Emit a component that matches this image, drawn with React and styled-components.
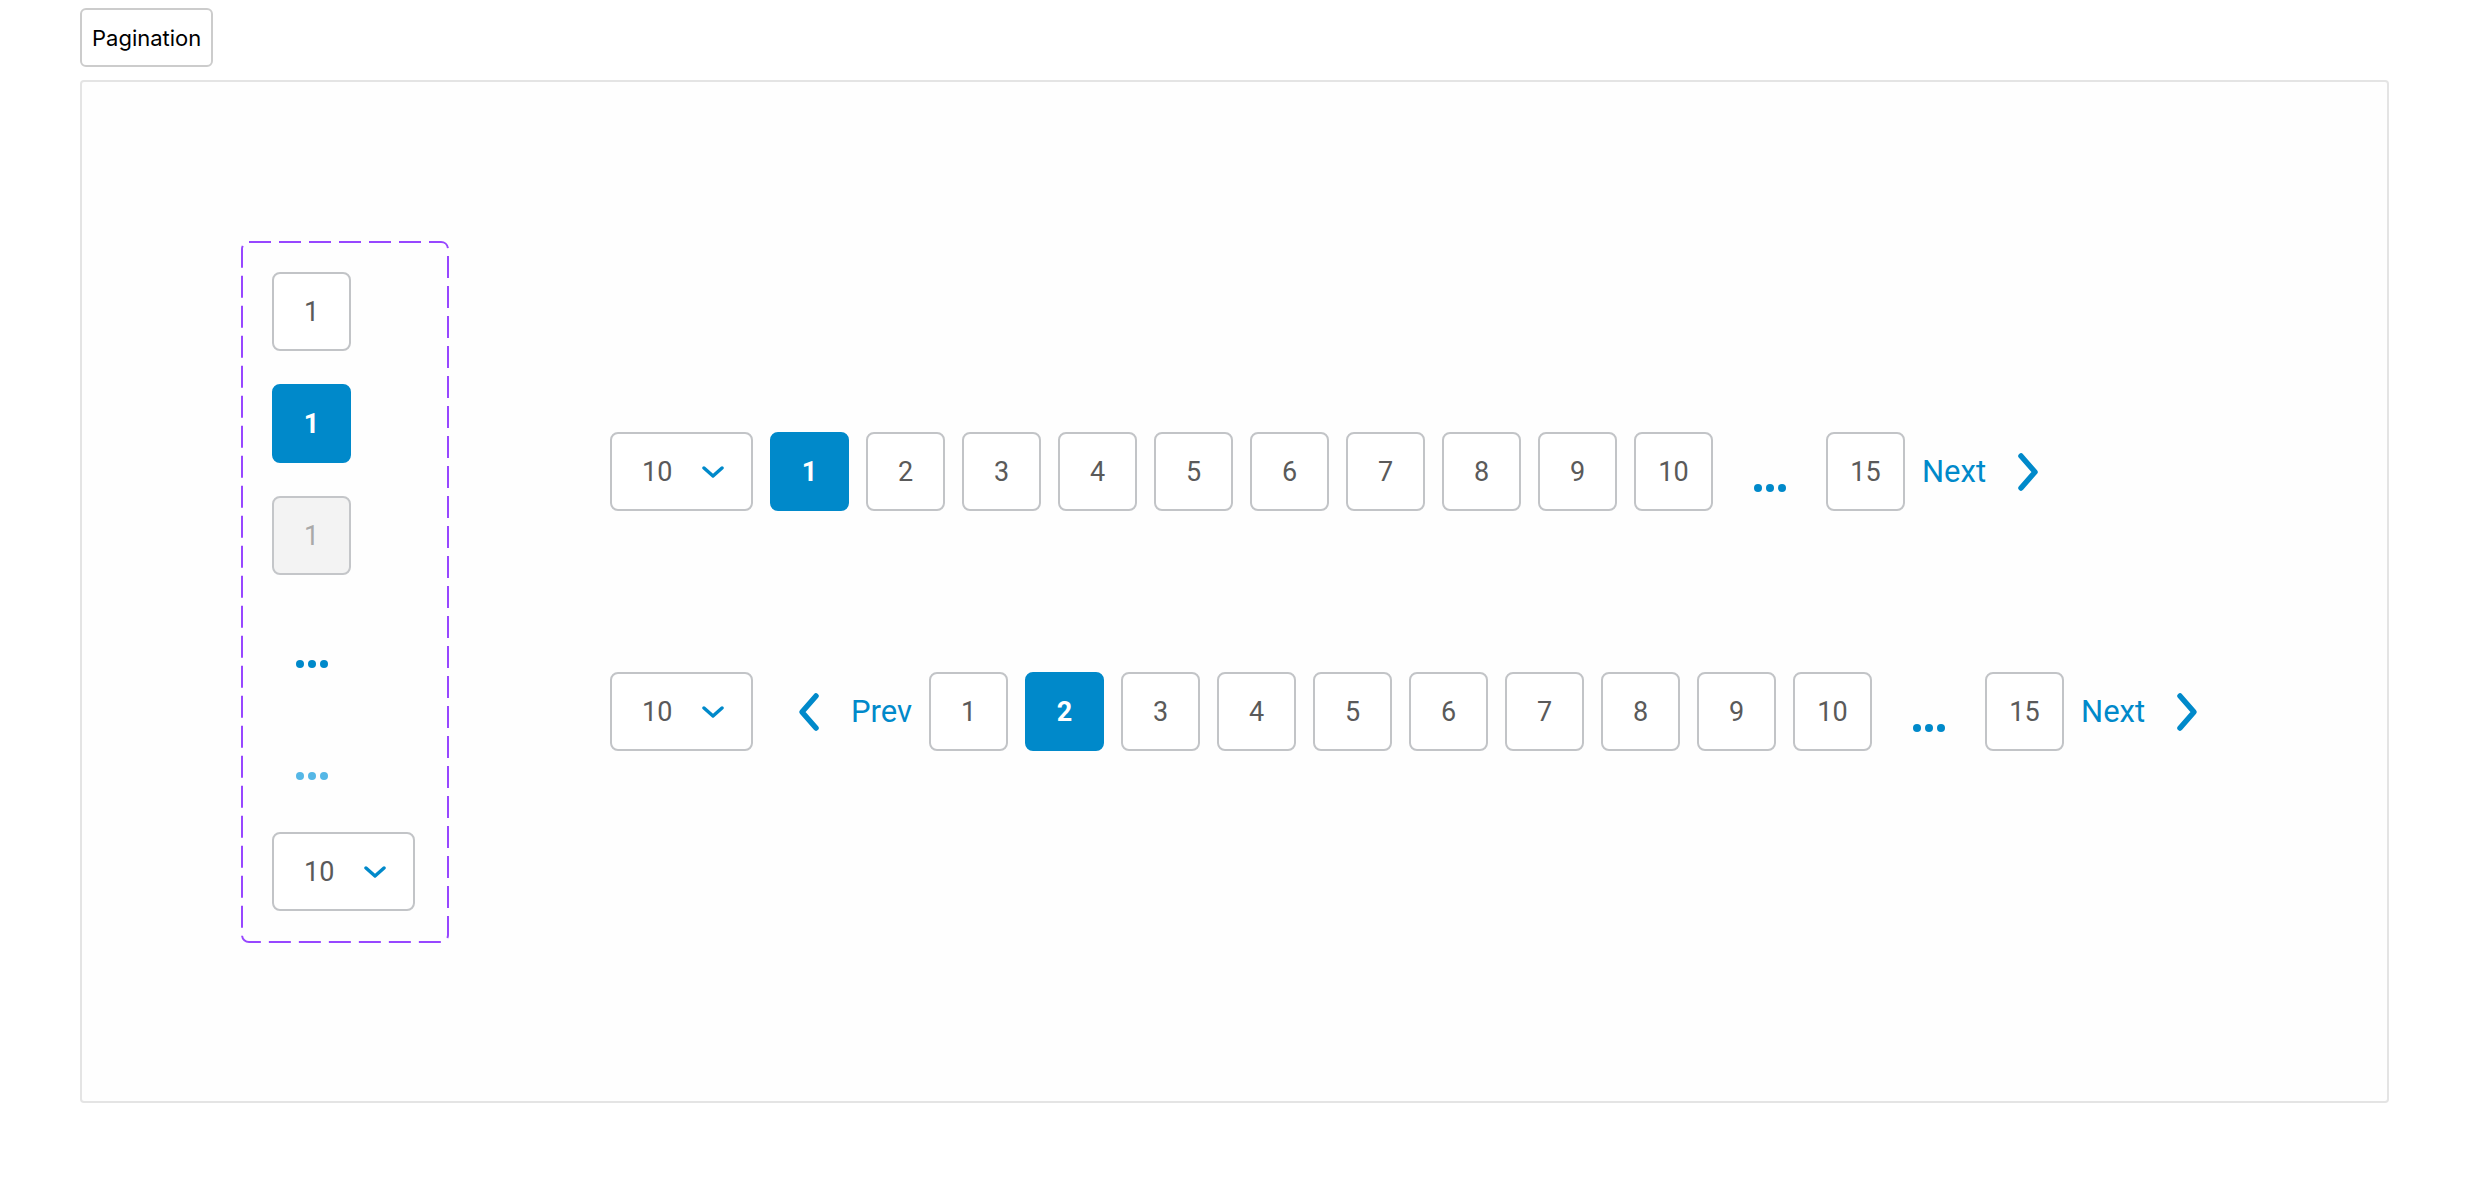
import React from "react";
import styled, { createGlobalStyle } from "styled-components";

const BLUE = "#0089ca";
const BORDER = "#c2c4c7";
const TEXT = "#5a5a5a";

const GlobalStyle = createGlobalStyle`
  html, body {
    margin: 0;
    background: #ffffff;
  }
  body {
    font-family: Roboto, "Liberation Sans", sans-serif;
  }
`;

function ChevronDown() {
  return (
    <svg width="22" height="12" viewBox="0 0 22 12" fill="none">
      <path d="M2 2 L11 10 L20 2" stroke={BLUE} strokeWidth="3.4" strokeLinecap="round" strokeLinejoin="round" />
    </svg>
  );
}

function Chevron({ dir = "right" }) {
  const d = dir === "right" ? "M4 4 L18 20 L4 36" : "M18 4 L4 20 L18 36";
  return (
    <svg width="22" height="40" viewBox="0 0 22 40" fill="none">
      <path d={d} stroke={BLUE} strokeWidth="5.5" strokeLinecap="round" strokeLinejoin="round" />
    </svg>
  );
}

function PerPageSelect({ value = 10 }) {
  return (
    <Select>
      <SelectValue>{value}</SelectValue>
      <ChevronDown />
    </Select>
  );
}

function Ellipsis({ light = false }) {
  return (
    <EllipsisSlot>
      <Dot light={light} />
      <Dot light={light} />
      <Dot light={light} />
    </EllipsisSlot>
  );
}

function PaginationRow({ current, showPrev }) {
  const pages = [1, 2, 3, 4, 5, 6, 7, 8, 9, 10];
  return (
    <Row>
      <PerPageSelect />
      {showPrev && (
        <NavButton prev>
          <Chevron dir="left" />
          <NavLabel>Prev</NavLabel>
        </NavButton>
      )}
      {pages.map((p) => (
        <PageBox key={p} active={p === current}>{p}</PageBox>
      ))}
      <Ellipsis />
      <PageBox>15</PageBox>
      <NavButton>
        <NavLabel>Next</NavLabel>
        <Chevron dir="right" />
      </NavButton>
    </Row>
  );
}

export default function App() {
  return (
    <>
      <GlobalStyle />
      <Page>
        <TabButton>Pagination</TabButton>
        <Card>
          <ComponentSet>
            <DashedOutline width="208" height="702" viewBox="0 0 208 702">
              <rect x="1" y="1" width="206" height="700" rx="7" ry="7" fill="none" stroke="#9747ff" strokeWidth="2" strokeDasharray="22 8" />
            </DashedOutline>
            <PageBox>1</PageBox>
            <PageBox active>1</PageBox>
            <PageBox disabled>1</PageBox>
            <Ellipsis />
            <Ellipsis light />
            <PerPageSelect />
          </ComponentSet>
          <Rows>
            <PaginationRow current={1} />
            <PaginationRow current={2} showPrev />
          </Rows>
        </Card>
      </Page>
    </>
  );
}

const Page = styled.div`
  padding: 8px 81px 40px 80px;
`;

const TabButton = styled.button`
  display: block;
  height: 59px;
  padding: 0 10px;
  margin: 0 0 13px 0;
  background: #ffffff;
  border: 2px solid #cccccc;
  border-radius: 6px;
  font-family: Inter, "Liberation Sans", sans-serif;
  font-size: 22px;
  color: #000000;
`;

const Card = styled.div`
  box-sizing: border-box;
  display: flex;
  align-items: center;
  gap: 161px;
  padding: 159px;
  border: 2px solid #e4e4e4;
  border-radius: 4px;
  background: #fefefe;
`;

const ComponentSet = styled.div`
  position: relative;
  box-sizing: border-box;
  width: 208px;
  display: flex;
  flex-direction: column;
  align-items: flex-start;
  gap: 33px;
  padding: 31px;
  flex-shrink: 0;
`;

const DashedOutline = styled.svg`
  position: absolute;
  left: 0;
  top: 0;
  pointer-events: none;
`;

const Rows = styled.div`
  display: flex;
  flex-direction: column;
  gap: 161px;
`;

const Row = styled.div`
  display: flex;
  align-items: center;
  gap: 17px;
`;

const PageBox = styled.div`
  box-sizing: border-box;
  width: 79px;
  height: 79px;
  display: flex;
  align-items: center;
  justify-content: center;
  border-radius: 8px;
  border: 2px solid ${({ active, disabled }) => (active ? BLUE : disabled ? "#c4c6c9" : BORDER)};
  background: ${({ active, disabled }) => (active ? BLUE : disabled ? "#f3f3f3" : "#ffffff")};
  color: ${({ active, disabled }) => (active ? "#ffffff" : disabled ? "#a9a9a9" : TEXT)};
  font-size: 27px;
  font-weight: ${({ active }) => (active ? 700 : 400)};
  flex-shrink: 0;
`;

const Select = styled.div`
  box-sizing: border-box;
  width: 143px;
  height: 79px;
  display: flex;
  align-items: center;
  justify-content: space-between;
  padding: 0 27px 0 30px;
  border: 2px solid ${BORDER};
  border-radius: 8px;
  background: #ffffff;
  flex-shrink: 0;
`;

const SelectValue = styled.span`
  font-size: 27px;
  color: ${TEXT};
`;

const EllipsisSlot = styled.div`
  box-sizing: border-box;
  width: 79px;
  height: 79px;
  padding-top: 32px;
  display: flex;
  align-items: center;
  justify-content: center;
  gap: 4px;
  flex-shrink: 0;
`;

const Dot = styled.span`
  width: 8px;
  height: 8px;
  border-radius: 50%;
  background: ${({ light }) => (light ? "#55b7e6" : BLUE)};
`;

const NavButton = styled.div`
  display: flex;
  align-items: center;
  gap: 31px;
  padding: ${({ prev }) => (prev ? "0 0 0 28px" : "0 29px 0 0")};
  flex-shrink: 0;
`;

const NavLabel = styled.span`
  font-size: 31px;
  color: ${BLUE};
`;
